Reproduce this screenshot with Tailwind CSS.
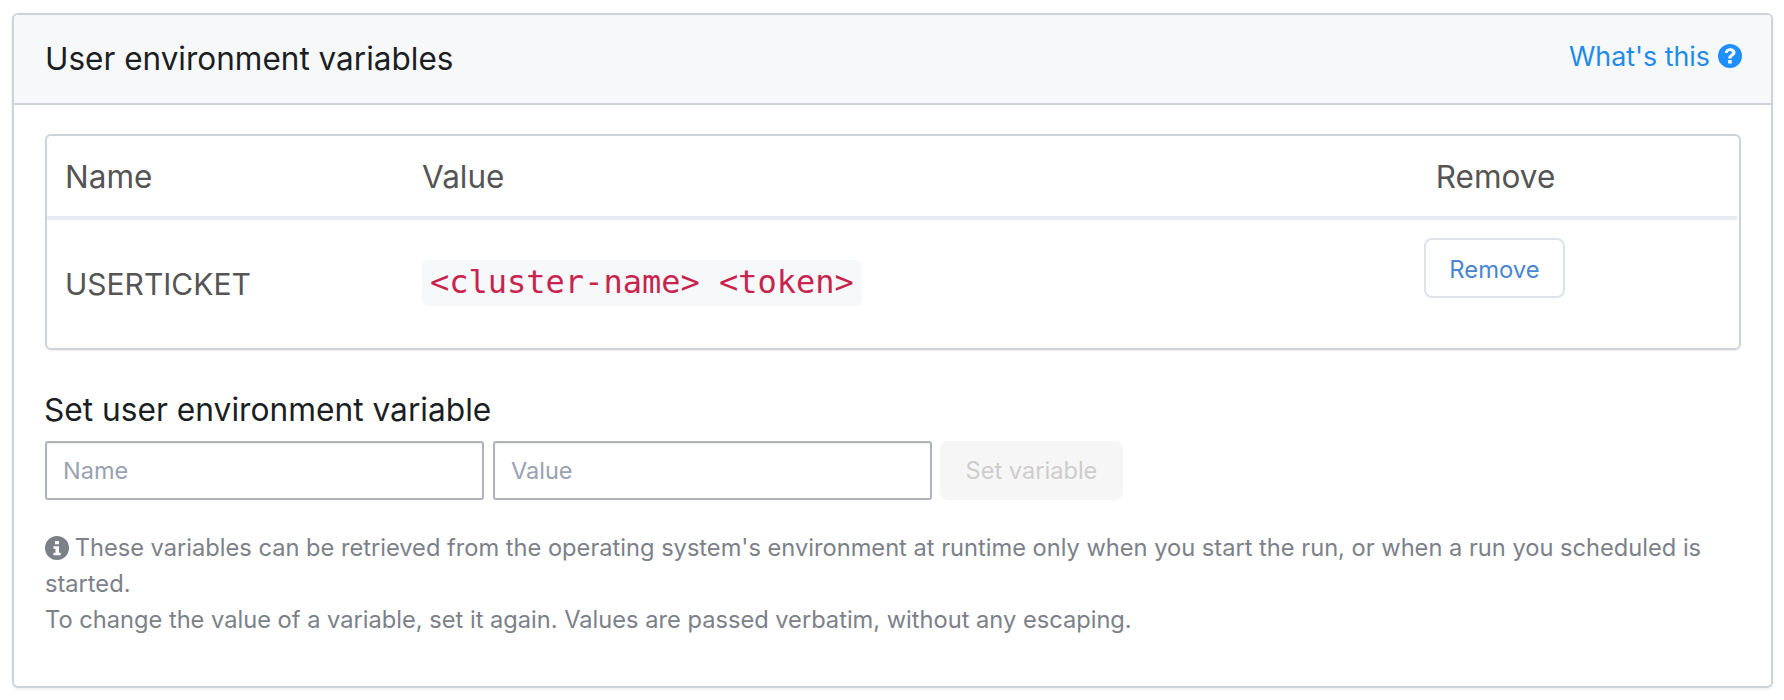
<!doctype html>
<html><head><meta charset="utf-8"><script src="https://cdn.jsdelivr.net/npm/@tailwindcss/browser@4"></script></head>
<body class="bg-white font-['Inter',sans-serif] overflow-hidden">
<div class="pl-3 pt-[13px] w-[1784px] h-[700px]">
 <div class="w-[1761px] h-[675px] border-2 border-[#ced3d9] rounded-md shadow-[0_1px_3px_rgba(0,0,0,0.08)] flex flex-col overflow-hidden">
  <div class="h-[90px] shrink-0 bg-[#f7f8fa] border-b-2 border-[#ced3d9] flex justify-between pl-[31px] pr-[29px]">
   <div class="text-[31.500px] leading-[88px] text-[#1b1f23]">User environment variables</div>
   <div class="flex items-center gap-2 h-[70px] mt-[6px] text-[#1f8ceb] text-[26.800px]">
    <span>What's this</span>
    <svg class="w-6 h-6" viewBox="0 0 24 24"><circle cx="12" cy="12" r="12" fill="#1f8fff"/><path d="M6.800 9c.2-3 2.400-4.800 5.500-4.800 3 0 5.200 1.700 5.200 4.200 0 1.900-1.100 2.900-2.500 3.800-1 .7-1.400 1.200-1.400 2.300H10.300c0-2 .7-3 2.100-3.900 1-.6 1.500-1.100 1.500-1.900 0-1-.8-1.600-2-1.600-1.300 0-2.100.7-2.200 1.900zM10.200 16h3.500v3.500h-3.500z" fill="#fff"/></svg>
   </div>
  </div>
  <div class="flex-1 pl-[31px] pr-[30px] pt-[29px]">
   <div class="h-[216px] border-2 border-[#ced3d9] rounded-md shadow-[0_1px_2px_rgba(0,0,0,0.06)] pr-[2px]">
    <div class="h-[84px] pt-[2px] grid grid-cols-[375px_1fr_141px_171px] items-center border-b-4 border-[#e9ecf3] text-[31.500px] text-[#555]">
     <div class="pl-[18px]">Name</div><div>Value</div><div class="text-center">Remove</div><div></div>
    </div>
    <div class="grid grid-cols-[375px_1fr_141px_171px] text-[30px] text-[#555]">
     <div class="pl-[18px] pt-[42px]">USERTICKET</div>
     <div class="pt-[40px]"><code class="inline-block h-[46px] leading-[45px] px-[8px] rounded-md bg-[#f7f8fa] text-[#c7254e] text-[32px] font-['DejaVu_Sans_Mono',monospace]">&lt;cluster-name&gt; &lt;token&gt;</code></div>
     <div class="pt-[18px] -ml-[1px]"><button class="w-[141px] h-[60px] pt-[3px] border-2 border-[#dfe2e6] rounded-lg text-[23.800px] text-[#4a86d4] bg-white">Remove</button></div>
     <div></div>
    </div>
   </div>
   <div class="mt-[41px] -ml-[1px] h-[38px] text-[31.700px] leading-[38px] text-[#1b1f23]">Set user environment variable</div>
   <div class="mt-[12px] flex gap-[9px]">
    <input placeholder="Name" class="w-[439px] h-[59px] border-2 border-[#b0b4ba] rounded-[3px] px-[16px] text-[23.500px] placeholder:text-[#98a2b0] outline-none shadow-[inset_0_1px_2px_rgba(0,0,0,0.08)]">
    <input placeholder="Value" class="w-[439px] h-[59px] border-2 border-[#b0b4ba] rounded-[3px] px-[16px] text-[23.500px] placeholder:text-[#98a2b0] outline-none shadow-[inset_0_1px_2px_rgba(0,0,0,0.08)]">
    <button class="w-[183px] h-[59px] -ml-[1px] rounded-lg bg-[#f6f6f6] text-[#cdcdcd] text-[23.600px]">Set variable</button>
   </div>
   <div class="mt-[30px] text-[#7c8189] text-[23.650px] leading-[36px]">
    <svg class="inline-block w-6 h-6 align-[-4px] -mr-[1px]" viewBox="0 0 24 24"><circle cx="12" cy="12" r="12" fill="#7c8189"/><path d="M10 5h4v3.300h-4zM8.500 10.300h5.500v6.500h1.700v2.400H8.500v-2.400h2V12.700h-2z" fill="#fff"/></svg>
    These variables can be retrieved from the operating system's environment at runtime only when you start the run, or when a run you scheduled is started.<br>To change the value of a variable, set it again. Values are passed verbatim, without any escaping.
   </div>
  </div>
 </div>
</div>
</body></html>
